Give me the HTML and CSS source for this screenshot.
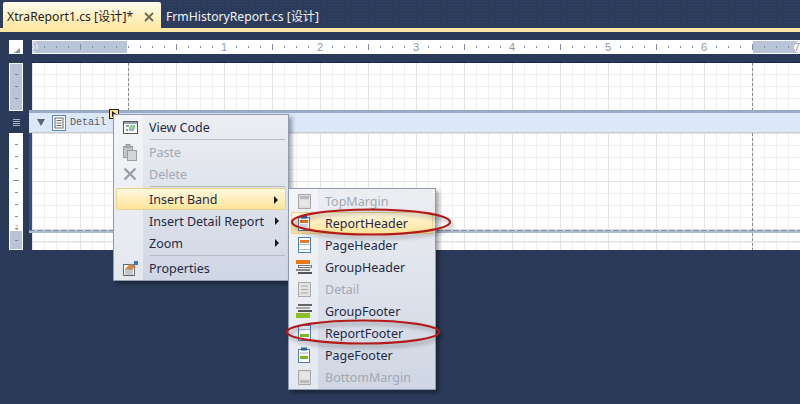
FILE: index.html
```html
<!DOCTYPE html>
<html lang="zh">
<head>
<meta charset="utf-8">
<title>XtraReport1.cs</title>
<link rel="stylesheet" href="styles.css">
</head>
<body>
<div class="tabbar">
  <div class="tab active"><span>XtraReport1.cs [设计]*</span>
    <svg class="close" width="10" height="10" viewBox="0 0 10 10"><path d="M1 1l8 8M9 1l-8 8" stroke="#6f6a58" stroke-width="1.8" fill="none"/></svg>
  </div>
  <div class="tab"><span>FrmHistoryReport.cs [设计]</span></div>
</div>
<div class="accent"></div>
<div class="ruler-row">
  <div class="corner"><svg width="14" height="14" viewBox="0 0 14 14"><path d="M5 10h6V5z" fill="#8592a8"/></svg></div>
  <div class="hruler">
    <div class="hshade first"></div>
    <div class="hshade last"></div>
    <div class="hticks">
      <span class="n-first">1</span><span></span><span>1</span><span>2</span><span>3</span><span>4</span><span>5</span><span>6</span><span class="n-last">7</span>
    </div>
  </div>
</div>
<div class="designer">
  <div class="vruler">
    <div class="vshade top"></div>
    <div class="vhandle"><i></i><i></i><i></i><i></i></div>
    <div class="vwhite"><b></b><em>1</em></div>
    <div class="vshade bottom"></div>
  </div>
  <div class="surface">
    <div class="sec sec-top"></div>
    <div class="band">
      <span class="tri"></span>
      <svg class="band-icon" width="14" height="16" viewBox="0 0 14 16"><rect x=".5" y=".5" width="13" height="15" fill="#fff" stroke="#5d86bd"/><rect x="3" y="3" width="8" height="10" fill="#fff" stroke="#666"/><path d="M4.500 5.500h5M4.500 8h5M4.500 10.500h5" stroke="#666"/></svg>
      <span class="band-name">Detail</span>
    </div>
    <div class="sec sec-mid"></div>
    <div class="band-line"></div>
    <div class="sec sec-bot"></div>
  </div>
</div>

<div class="tag"><svg width="8" height="8" viewBox="0 0 8 8"><path d="M2 1l4 3-4 3z" fill="#222"/></svg></div>

<div class="menu menu-main">
  <div class="mi"><span class="ic"><svg width="15" height="13" viewBox="0 0 15 13"><rect x=".5" y=".5" width="14" height="12" fill="#fff" stroke="#555"/><rect x="1" y="1" width="13" height="2" fill="#9aa3b5"/><path d="M3 5h3M3 9h2" stroke="#333"/><path d="M7 5h5M6 7h6" stroke="#2f9a3a"/><path d="M6 9h5" stroke="#3553b5"/></svg></span><span class="tx">View Code</span></div>
  <div class="sep"></div>
  <div class="mi off"><span class="ic"><svg width="14" height="17" viewBox="0 0 14 17"><rect x=".5" y="2.500" width="9" height="11" fill="#c3c6ca" stroke="#9a9da2"/><rect x="3" y="0.500" width="4" height="3" fill="#aeb1b6" stroke="#9a9da2"/><rect x="4.500" y="6.500" width="9" height="10" fill="#d3d5d8" stroke="#9a9da2"/></svg></span><span class="tx">Paste</span></div>
  <div class="mi off"><span class="ic"><svg width="14" height="14" viewBox="0 0 14 14"><path d="M1.500 1.500l11 11M12.500 1.500l-11 11" stroke="#9b9ea4" stroke-width="2.400" fill="none"/></svg></span><span class="tx">Delete</span></div>
  <div class="sep"></div>
  <div class="mi hot sub"><span class="ic"></span><span class="tx">Insert Band</span></div>
  <div class="mi sub"><span class="ic"></span><span class="tx">Insert Detail Report</span></div>
  <div class="mi sub"><span class="ic"></span><span class="tx">Zoom</span></div>
  <div class="sep"></div>
  <div class="mi"><span class="ic"><svg width="15" height="15" viewBox="0 0 15 15"><rect x=".5" y="3.500" width="11" height="11" fill="#fff" stroke="#666"/><path d="M2 9h8M2 11h8M2 13h8" stroke="#8a8f98"/><path d="M2 8l5-5 4 1 2 2-5 3z" fill="#c9894b"/><rect x="11" y="0" width="4" height="4" fill="#3f74c0"/></svg></span><span class="tx">Properties</span></div>
</div>

<div class="menu menu-sub">
  <div class="mi off"><span class="ic"><svg width="13" height="15" viewBox="0 0 13 15"><rect x=".5" y=".5" width="12" height="14" fill="#ddd" stroke="#aaa"/><rect x="2" y="2" width="9" height="3" fill="#bbb"/><rect x="2" y="6" width="9" height="7" fill="#e6e6e6"/></svg></span><span class="tx">TopMargin</span></div>
  <div class="mi hot"><span class="ic"><svg width="12" height="16" viewBox="0 0 12 16"><rect x=".5" y="2.500" width="11" height="13" fill="#fff" stroke="#4f7fbd"/><rect x="3" y="0.500" width="6" height="3" fill="#2f5f9f"/><rect x="2" y="5" width="8" height="3" fill="#e87a1e"/><path d="M2 10h8M2 12h8" stroke="#aac"/></svg></span><span class="tx">ReportHeader</span></div>
  <div class="mi"><span class="ic"><svg width="13" height="16" viewBox="0 0 13 16"><rect x=".5" y=".5" width="12" height="15" fill="#fff" stroke="#4f7fbd"/><rect x="2" y="3" width="9" height="3" fill="#e87a1e"/><path d="M1 7.500h11M1 12.500h11" stroke="#a8c0dd"/></svg></span><span class="tx">PageHeader</span></div>
  <div class="mi"><span class="ic"><svg width="16" height="14" viewBox="0 0 16 14"><rect x="0" y="0" width="14" height="4" fill="#e87a1e"/><rect x="2.500" y="5.500" width="13" height="2" fill="#fff" stroke="#555" stroke-width=".8"/><rect x="0" y="9" width="14" height="2" fill="#888"/><rect x="2" y="12" width="14" height="2" fill="#555"/></svg></span><span class="tx">GroupHeader</span></div>
  <div class="mi off"><span class="ic"><svg width="13" height="15" viewBox="0 0 13 15"><rect x=".5" y=".5" width="12" height="14" fill="#e4e4e4" stroke="#aaa"/><path d="M3 4h7M3 7.500h7M3 11h7" stroke="#aaa"/></svg></span><span class="tx">Detail</span></div>
  <div class="mi"><span class="ic"><svg width="16" height="14" viewBox="0 0 16 14"><rect x="2" y="0" width="14" height="2" fill="#666"/><rect x="0" y="3" width="14" height="2" fill="#aaa"/><rect x="2" y="6" width="14" height="2" fill="#555"/><rect x="0" y="9" width="14" height="5" fill="#8cbe1e"/></svg></span><span class="tx">GroupFooter</span></div>
  <div class="mi"><span class="ic"><svg width="13" height="16" viewBox="0 0 13 16"><rect x=".5" y=".5" width="12" height="15" fill="#fff" stroke="#4f7fbd"/><path d="M1 4.500h11" stroke="#a8c0dd"/><rect x="2" y="9" width="9" height="3" fill="#7db81c"/></svg></span><span class="tx">ReportFooter</span></div>
  <div class="mi"><span class="ic"><svg width="12" height="16" viewBox="0 0 12 16"><rect x=".5" y="2.500" width="11" height="13" fill="#fff" stroke="#4f7fbd"/><rect x="3" y="0.500" width="6" height="3" fill="#2f5f9f"/><path d="M2 6h8" stroke="#aac"/><rect x="2" y="9" width="8" height="3" fill="#7db81c"/></svg></span><span class="tx">PageFooter</span></div>
  <div class="mi off"><span class="ic"><svg width="13" height="15" viewBox="0 0 13 15"><rect x=".5" y=".5" width="12" height="14" fill="#ddd" stroke="#aaa"/><rect x="2" y="2" width="9" height="7" fill="#e6e6e6"/><rect x="2" y="10" width="9" height="3" fill="#bbb"/></svg></span><span class="tx">BottomMargin</span></div>
</div>

<svg class="ring ring-a" width="164" height="32" viewBox="0 0 164 32"><ellipse cx="80" cy="15" rx="79" ry="12.500"/></svg>
<svg class="ring ring-b" width="158" height="30" viewBox="0 0 158 30"><ellipse cx="77" cy="14" rx="76" ry="11.500"/></svg>
</body>
</html>
```
FILE: styles.css
```css
html, body { margin: 0; padding: 0; }
body {
  width: 800px; height: 404px; overflow: hidden; position: relative;
  background: #2b3a58;
  font-family: "Noto Sans", "Noto Sans CJK SC", sans-serif;
}
.tabbar {
  height: 28px; padding-left: 3px; display: flex; align-items: flex-end;
  background-color: #2c3b5a;
  background-image: radial-gradient(#36466a 0.7px, transparent 0.8px);
  background-size: 3px 3px;
}
.tab {
  height: 22px; display: flex; align-items: center; padding: 0 4px;
  color: #f2f4f8; font-size: 12.2px; line-height: 22px; white-space: nowrap;
}
.tab.active {
  padding-top: 4px; height: 22px; color: #1d1d1d; border-radius: 2px 2px 0 0;
  background: linear-gradient(#fffdf0, #ffeeb8 70%, #ffe8a6);
  justify-content: space-between; padding-right: 7px; width: 147px;
}
.tab:not(.active) { margin-left: 1px; }
.accent { height: 4px; background: #ffe8a6; }
.ruler-row { display: flex; margin-top: 8px; height: 14px; }
.corner { width: 14px; height: 14px; margin-left: 9px; background: #fff; }
.hruler { position: relative; flex: 1; margin-left: 9px; height: 14px; background: #fff; overflow: hidden; display: flex; }
.hshade { position: absolute; top: 1px; bottom: 1px; background: #b9c4d6; }
.hshade.first { left: 0; width: 95px; }
.hshade.last { left: 721px; right: 0; }
.hticks {
  position: relative; z-index: 1; display: flex; height: 14px; flex: 0 0 864px;
  margin-left: -48px;
  font: 11px/14px "Liberation Sans", sans-serif; color: #8f98a8;
  background-image:
    linear-gradient(to right, #7f8ca6 1px, transparent 1px),
    linear-gradient(to right, #7f8ca6 1px, transparent 1px);
  background-repeat: repeat-x;
  background-size: 96px 6px, 12px 2px;
  background-position: 96px 4px, 0 6px;
}
.hticks span { flex: 0 0 96px; text-align: center; }
.hticks span:not(:empty) { background: radial-gradient(circle at center, #fff 0, #fff 6px, transparent 6px); }
.hticks .n-first { padding-left: 6px; box-sizing: border-box; background: none; opacity: .5; }
.hticks .n-last { background: none; padding-right: 6px; box-sizing: border-box; }
.designer { display: flex; margin-top: 9px; height: 187px; }
.vruler { width: 14px; margin-left: 9px; display: flex; flex-direction: column; height: 187px; }
.vshade.top {
  height: 48px; box-sizing: border-box; border: 1px solid #fff; background-color: #b9c4d6;
  background-image: repeating-linear-gradient(transparent 0 10px, #7b869c 10px 11px, transparent 11px 12px);
  background-size: 3px 100%; background-position: 5px 0; background-repeat: no-repeat;
}
.vhandle { height: 22px; display: flex; flex-direction: column; align-items: center; justify-content: center; gap: 1px; }
.vhandle i { width: 7px; height: 1px; background: #aab4c6; }
.vwhite {
  flex: 1; background-color: #fff; position: relative;
  background-image: repeating-linear-gradient(transparent 0 11px, #7f8ca6 11px 12px);
  background-size: 3px 100%; background-position: 6px 0; background-repeat: no-repeat;
}
.vwhite b { display: block; position: absolute; left: 4px; top: 47px; width: 6px; height: 1px; background: #7f8ca6; }
.vwhite em { position: absolute; left: 6px; top: 91px; font: 8px/8px "Liberation Sans", sans-serif; color: #d9a070; }
.vshade.bottom {
  height: 20px; box-sizing: border-box; border: 1px solid #fff; background-color: #b9c4d6;
  background-image: linear-gradient(#7b869c, #7b869c);
  background-size: 3px 1px; background-position: 5px 9px; background-repeat: no-repeat;
}
.surface { flex: 1; margin-left: 6px; display: flex; flex-direction: column; height: 187px; }
.sec {
  background-color: #fff;
  background-image:
    repeating-linear-gradient(#8a8a8a 0 3px, transparent 3px 5px),
    repeating-linear-gradient(#8a8a8a 0 3px, transparent 3px 5px),
    linear-gradient(to right, #e2e2e2 1px, transparent 1px),
    linear-gradient(#e2e2e2 1px, transparent 1px),
    linear-gradient(to right, #f0f0f0 1px, transparent 1px),
    linear-gradient(#f0f0f0 1px, transparent 1px);
  background-size: 1px 100%, 1px 100%, 48px 48px, 48px 48px, 12px 12px, 12px 12px;
  background-position: 96px 0, 720px 0, 0 0, 0 0, 0 0, 0 0;
  background-repeat: no-repeat, no-repeat, repeat, repeat, repeat, repeat;
}
.sec-top { height: 47px; margin-left: 3px; box-shadow: 0 -1px 0 #1d2739; background-position: 96px 0, 720px 0, 0 -1px, 0 -1px, 0 -1px, 0 -1px; }
.band {
  height: 19px; display: flex; align-items: center;
  background: #dce8fa; border-top: 3px solid #98abcb; border-bottom: 1px solid #cdcdcd;
  color: #5a5a5a;
}
.tri { width: 0; height: 0; margin-left: 8px; border-left: 4px solid transparent; border-right: 4px solid transparent; border-top: 7px solid #5d6471; }
.band-icon { margin-left: 7px; }
.band-name { margin-left: 4px; font: 10px/14px "Liberation Mono", monospace; }
.sec-mid { height: 97px; border-left: 3px solid #34507c; }
.band-line {
  height: 3px; background-color: #aebcd6;
  background-image: repeating-linear-gradient(to right, #7f8ba3 0 6px, #c5cfe0 6px 8px);
  background-size: 100% 1px; background-repeat: no-repeat;
}
.sec-bot { height: 17px; margin-left: 3px; background-position: 96px 0, 720px 0, 0 -40px, 0 -40px, 0 -3px, 0 -3px; }
.tag {
  position: absolute; left: 109px; top: 109px; width: 8px; height: 8px; border: 1px solid #222;
  background: #fce28c; display: flex;
}
.menu {
  position: absolute; box-sizing: border-box; border: 1px solid #8e9bb0;
  background: linear-gradient(#eceef2, #cfd6e4);
  box-shadow: 3px 3px 4px rgba(0,0,0,.35);
  padding: 1px;
}
.menu::before {
  content: ""; position: absolute; left: 0; top: 0; bottom: 0; background: rgba(255,255,255,.42);
}
.menu-main { left: 113px; top: 114px; width: 176px; height: 167px; }
.menu-main::before { width: 29px; }
.menu-sub { left: 288px; top: 188px; width: 148px; height: 202px; }
.menu-sub::before { width: 29px; }
.mi {
  position: relative; height: 22px; display: flex; align-items: center;
  font-size: 12.5px; color: #1f2a44; box-sizing: border-box; margin: 0 1px;
}
.ic { display: flex; justify-content: center; align-items: center; flex: none; }
.menu-main .ic { width: 28px; }
.menu-main .tx { margin-left: 5px; }
.menu-sub .ic { width: 26px; }
.menu-sub .tx { margin-left: 8px; }
.hot .ic { margin-left: -1px; }
.off { color: #a3a8b2; }
.hot {
  border: 1px solid #e9d38e; border-radius: 2px;
  background: linear-gradient(#fff8e0, #ffefc0 45%, #ffe49a);
}
.sub::after {
  content: ""; position: absolute; right: 7px; top: 7px; width: 0; height: 0;
  border-top: 4px solid transparent; border-bottom: 4px solid transparent; border-left: 4px solid #1a1a1a;
}
.sep { height: 1px; margin: 1px 2px 1px 35px; background: #b4bac6; }
.ring { position: absolute; overflow: visible; filter: drop-shadow(2px 3px 2px rgba(0,0,0,.35)); }
.ring ellipse { fill: none; stroke: #b31b1b; stroke-width: 2.2; }
.ring-a { left: 291px; top: 207px; }
.ring-b { left: 286px; top: 318px; }
```
